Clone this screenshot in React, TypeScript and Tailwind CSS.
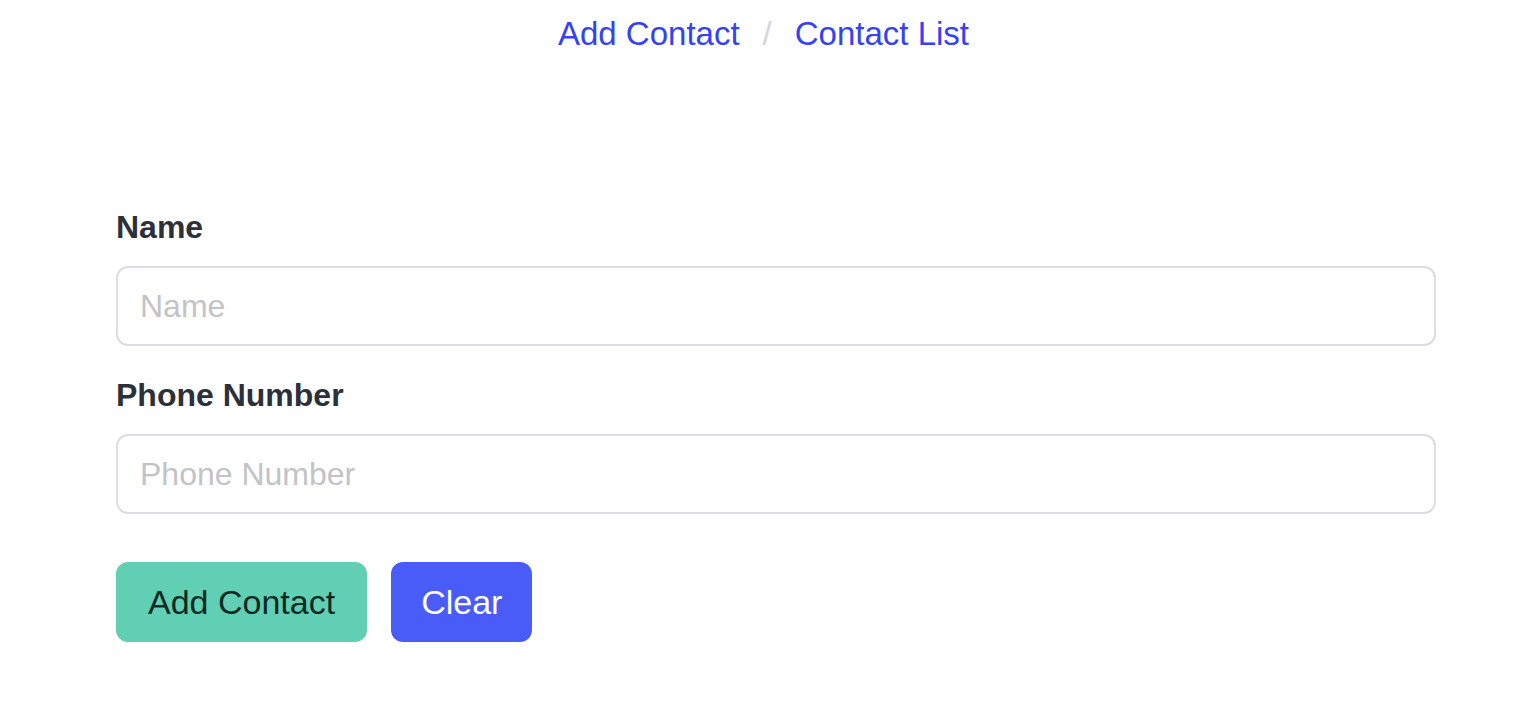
export default function App() {
  const font = { fontFamily: '"Liberation Sans", Arial, Helvetica, sans-serif' };
  return (
    <div className="min-h-[720px] bg-white" style={font}>
      <nav className="h-[68px] flex items-center justify-center pl-[9px] text-[33px] leading-[40px]">
        <a href="#" className="text-[#3342f2]">Add Contact</a>
        <span className="mx-[23px] text-[#d3d6dd]">/</span>
        <a href="#" className="text-[#3342f2]">Contact List</a>
      </nav>
      <form className="ml-[116px] w-[1320px] pt-[139px]" onSubmit={(e) => e.preventDefault()}>
        <label className="block text-[32px] leading-[40px] font-bold text-[#2c3039] mb-[19px]">Name</label>
        <input
          placeholder="Name"
          className="block w-full h-[80px] border-2 border-[#dcdde2] rounded-[12px] px-[22px] text-[32px] text-[#2c3039] placeholder:text-[#c2c3c7] outline-none"
        />
        <label className="block text-[32px] leading-[40px] font-bold text-[#2c3039] mt-[29px] mb-[19px]">Phone Number</label>
        <input
          placeholder="Phone Number"
          className="block w-full h-[80px] border-2 border-[#dcdde2] rounded-[12px] px-[22px] text-[32px] text-[#2c3039] placeholder:text-[#c2c3c7] outline-none"
        />
        <div className="flex gap-[24px] mt-[48px]">
          <button type="submit" className="h-[80px] px-[32px] rounded-[12px] bg-[#61cfb3] text-[#0e2a23] text-[34px]">Add Contact</button>
          <button type="button" className="h-[80px] px-[30px] rounded-[12px] bg-[#4a5cf8] text-white text-[34px]">Clear</button>
        </div>
      </form>
    </div>
  );
}
